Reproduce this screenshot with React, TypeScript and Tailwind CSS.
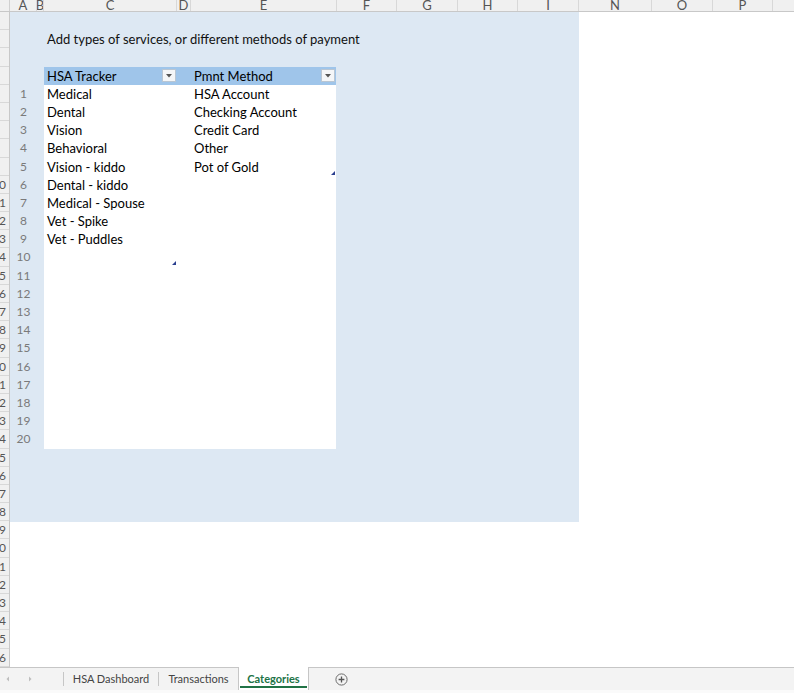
import React from "react";

const FONT = { fontFamily: "Lato, 'Open Sans', sans-serif" };

const cols: [string, number][] = [
  ["A", 27],
  ["B", 7],
  ["C", 133],
  ["D", 14],
  ["E", 146],
  ["F", 60],
  ["G", 61],
  ["H", 60],
  ["I", 61],
  ["N", 73],
  ["O", 61],
  ["P", 60],
  ["", 40],
];

const hsa = [
  "Medical",
  "Dental",
  "Vision",
  "Behavioral",
  "Vision - kiddo",
  "Dental - kiddo",
  "Medical - Spouse",
  "Vet - Spike",
  "Vet - Puddles",
];
const pm = ["HSA Account", "Checking Account", "Credit Card", "Other", "Pot of Gold"];

function Drop() {
  return (
    <div className="w-[14px] h-[13px] bg-[#f4f6f8] border border-[#b9c6d3] flex items-center justify-center">
      <svg width="6" height="4" viewBox="0 0 6 4">
        <path d="M0 0 L6 0 L3 3.5 Z" fill="#555" />
      </svg>
    </div>
  );
}

function Handle() {
  return (
    <svg width="4" height="4" viewBox="0 0 4 4">
      <path d="M4 0 L4 4 L0 4 Z" fill="#2a3f8f" />
    </svg>
  );
}

export default function App() {
  const rows = Array.from({ length: 36 }, (_, i) => i + 1);
  return (
    <div className="w-[794px] h-[693px] bg-white overflow-hidden flex flex-col text-[13px] text-black" style={FONT}>
      {/* column header */}
      <div className="h-[12px] flex bg-[#f0f0f0] border-b border-[#c8c8c8] shrink-0">
        <div className="w-[10px] border-r border-[#d0d0d0] shrink-0" />
        {cols.map(([l, w], i) => (
          <div
            key={i}
            className="shrink-0 border-r border-[#d8d8d8] flex justify-center items-end overflow-hidden text-[#555] text-[13px] leading-none"
            style={{ width: w }}
          >
            <span className="-mb-[1px]">{l}</span>
          </div>
        ))}
      </div>
      <div className="flex h-[655px] shrink-0">
        {/* row headers */}
        <div className="w-[10px] bg-[#f0f0f0] border-r border-[#c8c8c8] shrink-0 flex flex-col overflow-hidden">
          {rows.map((n) => (
            <div key={n} className="h-[18.2px] shrink-0 border-b border-[#d8d8d8] relative overflow-hidden text-[#555] text-[12px] leading-[18px]">
              {n >= 10 && <span className="absolute left-[-1px] top-0">{String(n % 10)}</span>}
            </div>
          ))}
        </div>
        <div className="flex-1">
          <div className="w-[569px] h-[509.6px] bg-[#dde8f3] flex flex-col">
            <div className="h-[18.2px]" />
            <div className="h-[18.2px] pl-[37px] leading-[18.2px] text-[#111]">
              Add types of services, or different methods of payment
            </div>
            <div className="h-[18.2px]" />
            <div className="flex">
              <div className="w-[27px] shrink-0 flex flex-col">
                <div className="h-[18.2px]" />
                {Array.from({ length: 20 }, (_, i) => (
                  <div key={i} className="h-[18.2px] text-center leading-[18.2px] text-[#7a7a7a] text-[12px]">
                    {i + 1}
                  </div>
                ))}
              </div>
              <div className="w-[7px] shrink-0" />
              <div className="w-[292px] shrink-0 flex flex-col">
                <div className="h-[18.2px] bg-[#9fc5ea] flex items-center">
                  <div className="w-[133px] flex items-center justify-between pl-[3px] pr-[1px]">
                    <span className="mt-[2px]">HSA Tracker</span>
                    <Drop />
                  </div>
                  <div className="w-[14px]" />
                  <div className="flex-1 flex items-center justify-between pl-[3px] pr-[1px]">
                    <span className="mt-[2px]">Pmnt Method</span>
                    <Drop />
                  </div>
                </div>
                <div className="bg-white flex h-[364px]">
                  <div className="w-[133px] relative flex flex-col">
                    {hsa.map((t) => (
                      <div key={t} className="h-[18.2px] leading-[18.2px] pl-[3px]">
                        {t}
                      </div>
                    ))}
                    <div className="absolute left-[128px] top-[176px]">
                      <Handle />
                    </div>
                  </div>
                  <div className="w-[14px]" />
                  <div className="flex-1 relative flex flex-col">
                    {pm.map((t) => (
                      <div key={t} className="h-[18.2px] leading-[18.2px] pl-[3px]">
                        {t}
                      </div>
                    ))}
                    <div className="absolute right-[1px] top-[86px]">
                      <Handle />
                    </div>
                  </div>
                </div>
              </div>
            </div>
          </div>
        </div>
      </div>
      {/* tab bar */}
      <div className="h-[23px] shrink-0 bg-[#f3f3f3] border-t border-[#c6c6c6] flex items-stretch text-[11px] text-[#444]">
        <div className="w-[63px] flex items-center shrink-0">
          <svg width="8" height="8" viewBox="0 0 8 8" className="ml-[4px]">
            <path d="M5 1.5 L2.5 4 L5 6.5 Z" fill="#bdbdbd" />
          </svg>
          <svg width="8" height="8" viewBox="0 0 8 8" className="ml-[14px]">
            <path d="M3 1.5 L5.5 4 L3 6.5 Z" fill="#bdbdbd" />
          </svg>
        </div>
        <div className="w-px bg-[#c6c6c6] my-[4px]" />
        <div className="w-[94px] flex items-center justify-center">HSA Dashboard</div>
        <div className="w-px bg-[#c6c6c6] my-[4px]" />
        <div className="w-[79px] flex items-center justify-center">Transactions</div>
        <div className="w-[71px] -mt-px bg-white border-x border-[#c6c6c6] relative flex items-center justify-center font-bold text-[#217346]">
          <span className="mt-[1px]">Categories</span>
          <div className="absolute left-[1px] right-[1px] bottom-[2px] h-[2px] bg-[#217346]" />
        </div>
        <div className="flex items-center ml-[26px]">
          <svg width="13" height="13" viewBox="0 0 13 13">
            <circle cx="6.5" cy="6.5" r="5.6" fill="none" stroke="#6b6b6b" strokeWidth="1" />
            <path d="M6.5 3.6 V9.4 M3.6 6.5 H9.4" stroke="#555" strokeWidth="1.3" />
          </svg>
        </div>
      </div>
      <div className="flex-1 bg-[#fafafa]" />
    </div>
  );
}
